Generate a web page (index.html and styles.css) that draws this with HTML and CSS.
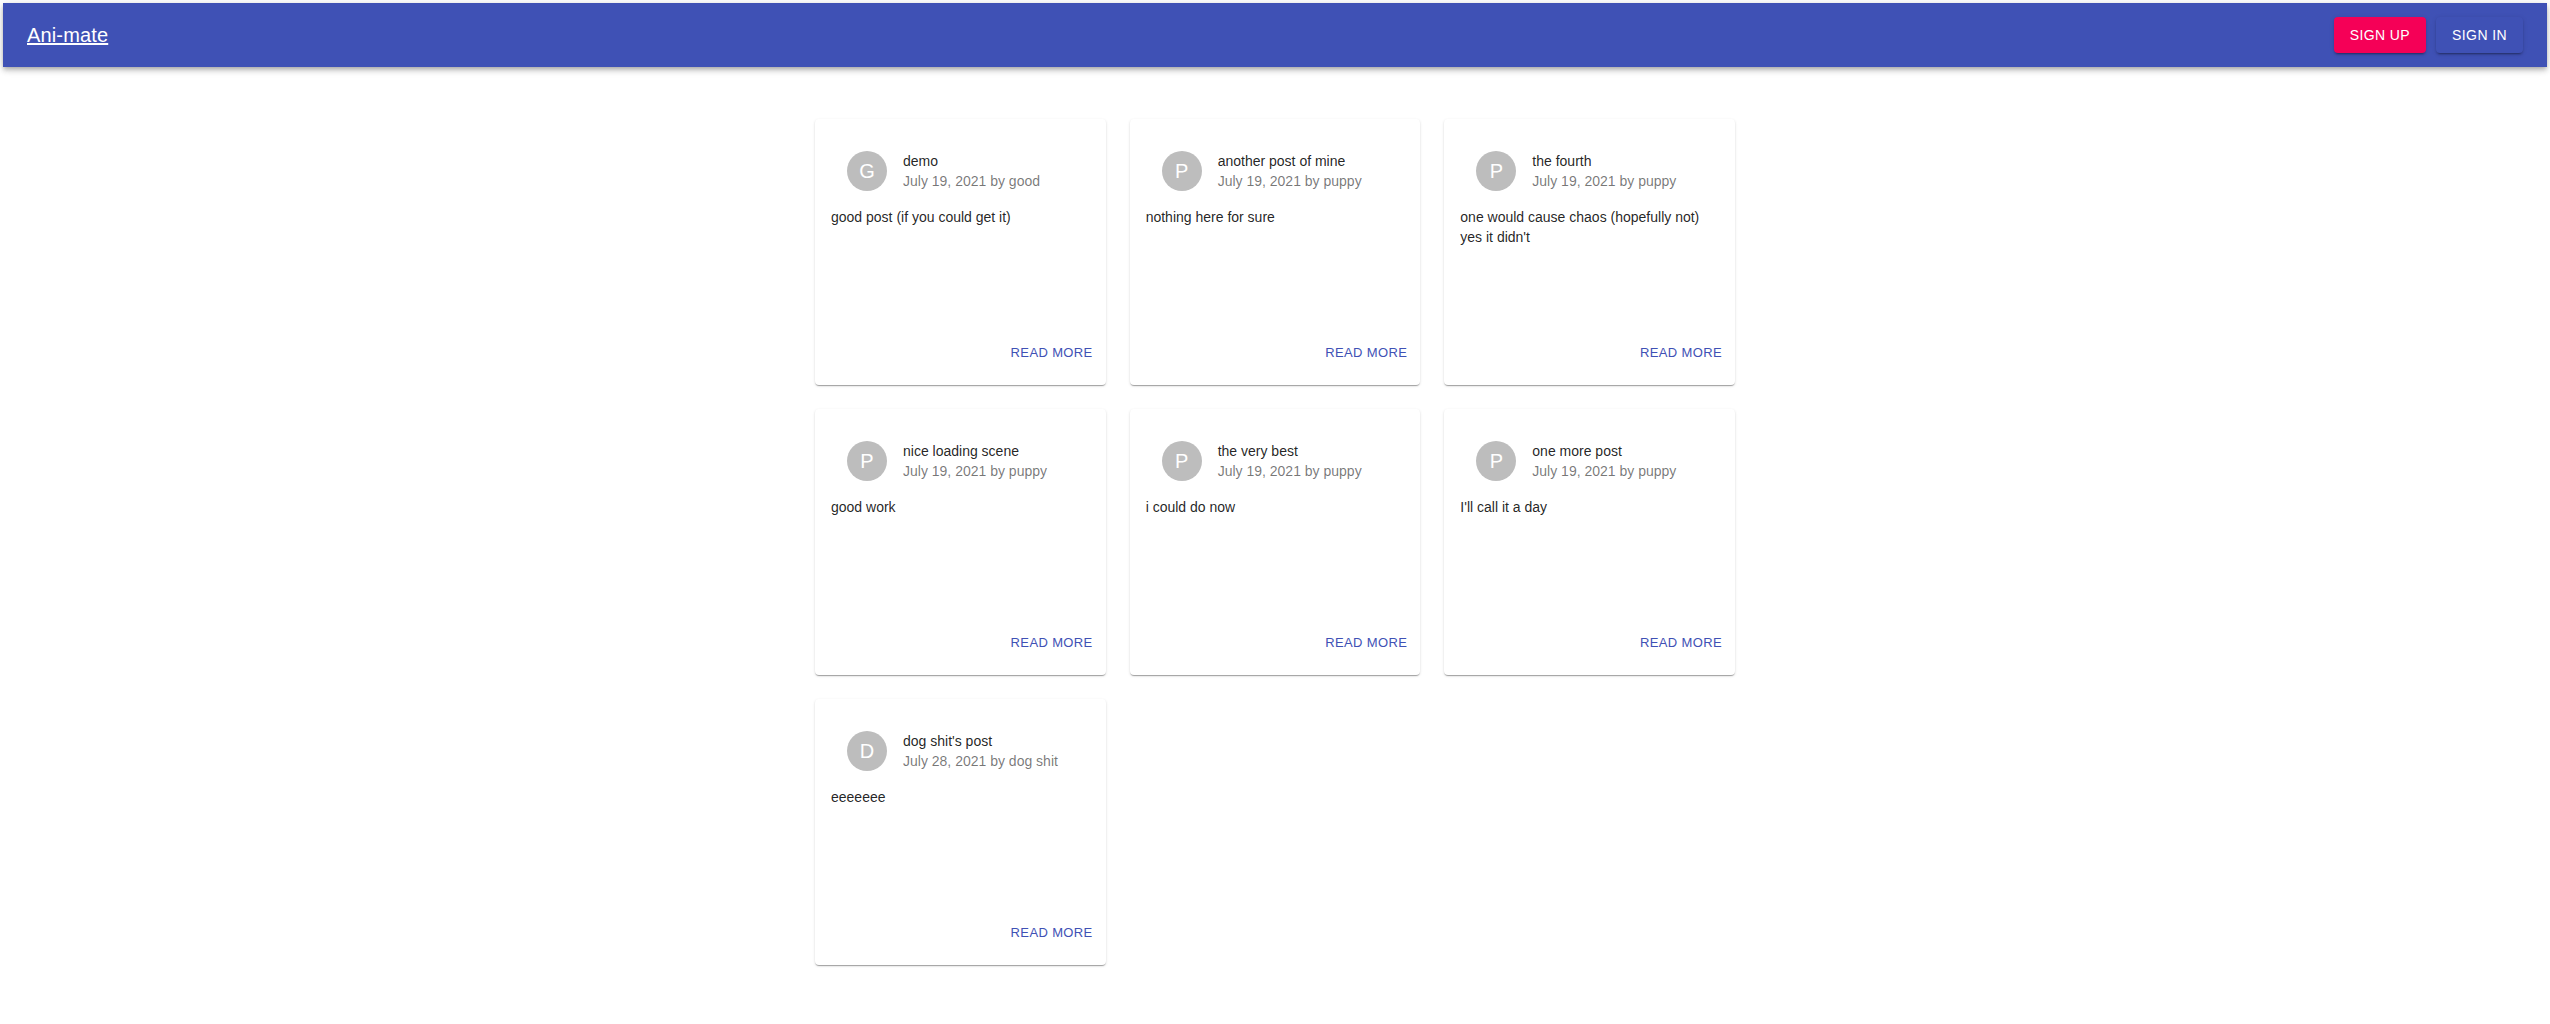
FILE: index.html
```html
<!DOCTYPE html>
<html lang="en">
<head>
<meta charset="utf-8">
<title>Ani-mate</title>
<link rel="stylesheet" href="styles.css">
</head>
<body>
<header class="appbar">
  <a class="brand" href="#">Ani-mate</a>
  <div class="actions-top">
    <button class="btn btn-secondary">Sign up</button>
    <button class="btn btn-primary">Sign in</button>
  </div>
</header>
<main class="grid">
  <article class="card">
    <div class="card-content">
      <div class="card-header">
        <div class="avatar">G</div>
        <div class="meta"><div class="title">demo</div><div class="sub">July 19, 2021 by good</div></div>
      </div>
      <p class="body">good post (if you could get it)</p>
    </div>
    <div class="card-actions"><button class="text-btn">Read more</button></div>
  </article>
  <article class="card">
    <div class="card-content">
      <div class="card-header">
        <div class="avatar">P</div>
        <div class="meta"><div class="title">another post of mine</div><div class="sub">July 19, 2021 by puppy</div></div>
      </div>
      <p class="body">nothing here for sure</p>
    </div>
    <div class="card-actions"><button class="text-btn">Read more</button></div>
  </article>
  <article class="card">
    <div class="card-content">
      <div class="card-header">
        <div class="avatar">P</div>
        <div class="meta"><div class="title">the fourth</div><div class="sub">July 19, 2021 by puppy</div></div>
      </div>
      <p class="body">one would cause chaos (hopefully not)<br>yes it didn't</p>
    </div>
    <div class="card-actions"><button class="text-btn">Read more</button></div>
  </article>
  <article class="card">
    <div class="card-content">
      <div class="card-header">
        <div class="avatar">P</div>
        <div class="meta"><div class="title">nice loading scene</div><div class="sub">July 19, 2021 by puppy</div></div>
      </div>
      <p class="body">good work</p>
    </div>
    <div class="card-actions"><button class="text-btn">Read more</button></div>
  </article>
  <article class="card">
    <div class="card-content">
      <div class="card-header">
        <div class="avatar">P</div>
        <div class="meta"><div class="title">the very best</div><div class="sub">July 19, 2021 by puppy</div></div>
      </div>
      <p class="body">i could do now</p>
    </div>
    <div class="card-actions"><button class="text-btn">Read more</button></div>
  </article>
  <article class="card">
    <div class="card-content">
      <div class="card-header">
        <div class="avatar">P</div>
        <div class="meta"><div class="title">one more post</div><div class="sub">July 19, 2021 by puppy</div></div>
      </div>
      <p class="body">I'll call it a day</p>
    </div>
    <div class="card-actions"><button class="text-btn">Read more</button></div>
  </article>
  <article class="card">
    <div class="card-content">
      <div class="card-header">
        <div class="avatar">D</div>
        <div class="meta"><div class="title">dog shit's post</div><div class="sub">July 28, 2021 by dog shit</div></div>
      </div>
      <p class="body">eeeeeee</p>
    </div>
    <div class="card-actions"><button class="text-btn">Read more</button></div>
  </article>
</main>
</body>
</html>
```

FILE: styles.css
```css
* { box-sizing: border-box; }

html, body {
  margin: 0;
  padding: 0;
  background: #fff;
}

body {
  font-family: "Liberation Sans", Arial, Helvetica, sans-serif;
  color: rgba(0, 0, 0, 0.87);
  padding: 3px;
}

.appbar {
  height: 64px;
  background: #3f51b5;
  display: flex;
  align-items: center;
  justify-content: space-between;
  padding: 0 24px;
  box-shadow: 0 2px 4px -1px rgba(0,0,0,0.2), 0 4px 5px 0 rgba(0,0,0,0.14), 0 1px 10px 0 rgba(0,0,0,0.12);
}

.brand {
  color: #fff;
  font-size: 20px;
  line-height: 1.6;
  font-weight: 500;
  text-decoration: underline;
  letter-spacing: 0.0075em;
}

.actions-top {
  display: flex;
  gap: 10px;
}

.btn {
  height: 36px;
  padding: 6px 16px;
  border: 0;
  border-radius: 4px;
  color: #fff;
  font-family: inherit;
  font-size: 14px;
  font-weight: 500;
  letter-spacing: 0.02857em;
  text-transform: uppercase;
  line-height: 1.75;
  box-shadow: 0 3px 1px -2px rgba(0,0,0,0.2), 0 2px 2px 0 rgba(0,0,0,0.14), 0 1px 5px 0 rgba(0,0,0,0.12);
}

.btn-secondary { background: #f50057; }
.btn-primary { background: #3f51b5; }

.grid {
  width: 920px;
  margin: 52px auto 0;
  display: grid;
  grid-template-columns: repeat(3, 1fr);
  gap: 24px;
}

.card {
  height: 266px;
  background: #fff;
  border-radius: 4px;
  display: flex;
  flex-direction: column;
  box-shadow: 0 2px 1px -1px rgba(0,0,0,0.2), 0 1px 1px 0 rgba(0,0,0,0.14), 0 1px 3px 0 rgba(0,0,0,0.12);
}

.card-content {
  padding: 16px;
}

.card-header {
  display: flex;
  align-items: center;
  padding: 16px;
}

.avatar {
  width: 40px;
  height: 40px;
  border-radius: 50%;
  background: #bdbdbd;
  color: #fff;
  font-size: 20px;
  display: flex;
  align-items: center;
  justify-content: center;
  margin-right: 16px;
  flex-shrink: 0;
}

.title, .sub, .body {
  font-size: 14px;
  line-height: 20px;
}

.title { color: rgba(0, 0, 0, 0.87); }
.sub { color: rgba(0, 0, 0, 0.54); }

.body {
  margin: 0;
  color: rgba(0, 0, 0, 0.87);
}

.card-actions {
  margin-top: auto;
  display: flex;
  justify-content: flex-end;
  padding: 8px 8px 16px;
}

.text-btn {
  background: none;
  border: 0;
  padding: 4px 5px;
  color: #3f51b5;
  font-family: inherit;
  font-size: 13px;
  font-weight: 500;
  line-height: 1.75;
  letter-spacing: 0.02857em;
  text-transform: uppercase;
}
```
